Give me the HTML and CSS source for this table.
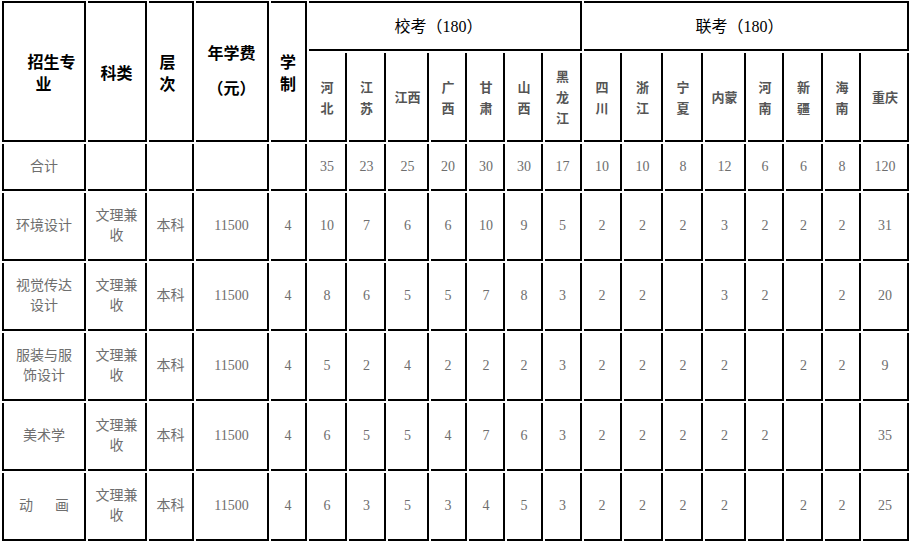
FILE: index.html
```html
<!DOCTYPE html>
<html lang="zh-CN">
<head>
<meta charset="utf-8">
<title>招生计划</title>
<link rel="stylesheet" href="styles.css">
</head>
<body>
<div class="sheet" role="table">
  <div class="cell h top first span2 lead"><span class="txt">招生专<br><span class="pad-r">业</span></span></div>
  <div class="cell h top span2">科类</div>
  <div class="cell h top span2 shift">层<br>次</div>
  <div class="cell h top span2 fee">年学费<br>（元）</div>
  <div class="cell h top span2">学<br>制</div>
  <div class="cell grp top c7">校考（180）</div>
  <div class="cell grp top c8">联考（180）</div>

  <div class="cell p">河<br>北</div>
  <div class="cell p">江<br>苏</div>
  <div class="cell p">江西</div>
  <div class="cell p">广<br>西</div>
  <div class="cell p">甘<br>肃</div>
  <div class="cell p">山<br>西</div>
  <div class="cell p">黑<br>龙<br>江</div>
  <div class="cell p">四<br>川</div>
  <div class="cell p">浙<br>江</div>
  <div class="cell p">宁<br>夏</div>
  <div class="cell p">内蒙</div>
  <div class="cell p">河<br>南</div>
  <div class="cell p">新<br>疆</div>
  <div class="cell p">海<br>南</div>
  <div class="cell p">重庆</div>

  <div class="cell first">合计</div>
  <div class="cell"></div>
  <div class="cell"></div>
  <div class="cell"></div>
  <div class="cell"></div>
  <div class="cell">35</div><div class="cell">23</div><div class="cell">25</div><div class="cell">20</div><div class="cell">30</div><div class="cell">30</div><div class="cell">17</div>
  <div class="cell">10</div><div class="cell">10</div><div class="cell">8</div><div class="cell">12</div><div class="cell">6</div><div class="cell">6</div><div class="cell">8</div><div class="cell">120</div>

  <div class="cell first">环境设计</div>
  <div class="cell">文理兼<br>收</div>
  <div class="cell">本科</div>
  <div class="cell">11500</div>
  <div class="cell">4</div>
  <div class="cell">10</div><div class="cell">7</div><div class="cell">6</div><div class="cell">6</div><div class="cell">10</div><div class="cell">9</div><div class="cell">5</div>
  <div class="cell">2</div><div class="cell">2</div><div class="cell">2</div><div class="cell">3</div><div class="cell">2</div><div class="cell">2</div><div class="cell">2</div><div class="cell">31</div>

  <div class="cell first">视觉传达<br>设计</div>
  <div class="cell">文理兼<br>收</div>
  <div class="cell">本科</div>
  <div class="cell">11500</div>
  <div class="cell">4</div>
  <div class="cell">8</div><div class="cell">6</div><div class="cell">5</div><div class="cell">5</div><div class="cell">7</div><div class="cell">8</div><div class="cell">3</div>
  <div class="cell">2</div><div class="cell">2</div><div class="cell"></div><div class="cell">3</div><div class="cell">2</div><div class="cell"></div><div class="cell">2</div><div class="cell">20</div>

  <div class="cell first">服装与服<br>饰设计</div>
  <div class="cell">文理兼<br>收</div>
  <div class="cell">本科</div>
  <div class="cell">11500</div>
  <div class="cell">4</div>
  <div class="cell">5</div><div class="cell">2</div><div class="cell">4</div><div class="cell">2</div><div class="cell">2</div><div class="cell">2</div><div class="cell">3</div>
  <div class="cell">2</div><div class="cell">2</div><div class="cell">2</div><div class="cell">2</div><div class="cell"></div><div class="cell">2</div><div class="cell">2</div><div class="cell">9</div>

  <div class="cell first">美术学</div>
  <div class="cell">文理兼<br>收</div>
  <div class="cell">本科</div>
  <div class="cell">11500</div>
  <div class="cell">4</div>
  <div class="cell">6</div><div class="cell">5</div><div class="cell">5</div><div class="cell">4</div><div class="cell">7</div><div class="cell">6</div><div class="cell">3</div>
  <div class="cell">2</div><div class="cell">2</div><div class="cell">2</div><div class="cell">2</div><div class="cell">2</div><div class="cell"></div><div class="cell"></div><div class="cell">35</div>

  <div class="cell first"><span class="txt">动<span class="sp"></span>画</span></div>
  <div class="cell">文理兼<br>收</div>
  <div class="cell">本科</div>
  <div class="cell">11500</div>
  <div class="cell">4</div>
  <div class="cell">6</div><div class="cell">3</div><div class="cell">5</div><div class="cell">3</div><div class="cell">4</div><div class="cell">5</div><div class="cell">3</div>
  <div class="cell">2</div><div class="cell">2</div><div class="cell">2</div><div class="cell">2</div><div class="cell"></div><div class="cell">2</div><div class="cell">2</div><div class="cell">25</div>
</div>
</body>
</html>
```

FILE: styles.css
```css
html, body {
  margin: 0;
  padding: 0;
  background: #ffffff;
}

body {
  width: 912px;
  height: 543px;
  overflow: hidden;
}

.sheet {
  display: grid;
  grid-template-columns: 84px 59px 45px 73px 36px 38px 37px 41px 36px 36px 36px 37px 38px 39px 38px 41px 36px 37px 36px 46px;
  grid-template-rows: 50px 89px 47px repeat(5, 68px);
  gap: 2px;
  padding: 1px 0 0 2px;
  font-family: "Liberation Serif", "Noto Sans CJK SC", serif;
}

.cell {
  box-sizing: border-box;
  border-right: 2px solid #000;
  border-bottom: 2px solid #000;
  display: flex;
  align-items: center;
  justify-content: center;
  text-align: center;
  color: #6e6e6e;
  font-size: 14px;
  line-height: 20px;
}

.txt {
  display: block;
}

.top {
  border-top: 2px solid #000;
}

.first {
  border-left: 2px solid #000;
}

.span2 {
  grid-row: span 2;
}

.c7 {
  grid-column: span 7;
}

.c8 {
  grid-column: span 8;
}

.h {
  font-family: "Noto Sans CJK SC", sans-serif;
  font-weight: bold;
  color: #000;
  font-size: 16px;
  line-height: 22px;
}

.lead {
  padding-left: 15px;
}

.shift {
  padding-right: 6px;
}

.fee {
  line-height: 35px;
  padding-bottom: 4px;
}

.pad-r {
  padding-right: 1em;
}

.grp {
  color: #000;
  font-size: 16px;
  padding-right: 12px;
  padding-top: 1px;
}

.p {
  font-family: "Noto Sans CJK SC", sans-serif;
  font-weight: bold;
  color: #555;
  font-size: 13px;
  line-height: 21px;
}

.sp {
  display: inline-block;
  width: 22px;
}
```
